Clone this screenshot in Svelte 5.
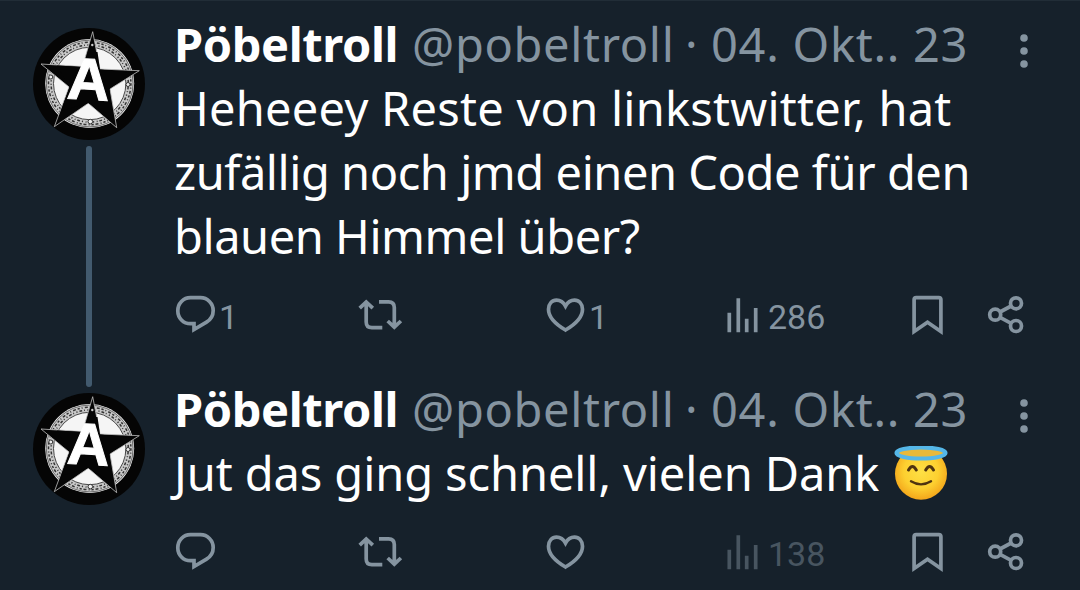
<script lang="ts">
	type Line = { text: string; fit: string };

	type Post = {
		id: number;
		lines: Line[];
		halo?: boolean;
		replies?: number;
		likes?: number;
		views: number;
		muted?: boolean;
	};

	const author = { name: 'Pöbeltroll', handle: '@pobeltroll', date: '04. Okt.. 23' };

	// fit picks the tracking used for that line
	const posts: Post[] = [
		{
			id: 1,
			lines: [
				{ text: 'Heheeey Reste von linkstwitter, hat', fit: 'loose' },
				{ text: 'zufällig noch jmd einen Code für den', fit: 'tight' },
				{ text: 'blauen Himmel über?', fit: 'tight' }
			],
			replies: 1,
			likes: 1,
			views: 286
		},
		{
			id: 2,
			lines: [{ text: 'Jut das ging schnell, vielen Dank', fit: 'snug' }],
			halo: true,
			views: 138,
			muted: true
		}
	];
</script>

{#snippet avatar()}
	<svg class="avatar" viewBox="0 0 112 112" role="img" aria-label={author.name}>
		<circle cx="56" cy="56" r="56" fill="#050505" />
		<circle cx="56.7" cy="55.5" r="44.5" fill="#f5f5f5" />
		<!-- lettering band -->
		<circle cx="56.7" cy="55.5" r="40.2" fill="none" stroke="#c8c8c8" stroke-width="7.6" />
		<g fill="none" stroke="#333">
			<circle cx="56.7" cy="55.5" r="43.4" stroke-width="0.6" />
			<circle cx="56.7" cy="55.5" r="36.2" stroke-width="0.9" />
			<circle cx="56.7" cy="55.5" r="41.2" stroke-width="1.5" stroke-dasharray="2.3 1.9 1 2.2 3 1.7" />
			<circle cx="56.7" cy="55.5" r="38.6" stroke-width="1.5" stroke-dasharray="1.2 2 2.8 1.8 .9 2.5" />
		</g>
		<g fill="#eee" stroke="#333" stroke-width="1">
			<circle cx="57.3" cy="93.6" r="2.3" />
			<circle cx="17.8" cy="49" r="2" />
			<circle cx="95" cy="56.5" r="2" />
		</g>
		<path
			d="M59.7 3.7 67 41 106.3 42.7 77 61 83.7 99.7 55.3 75.3 21.3 98.7 36 59 8 36 49.5 38.5Z"
			fill="#050505"
			stroke="#c0c0c0"
			stroke-width=".8"
		/>
		<path
			d="M55.5 24 50 38.9 24 37.5 36.5 59 28 83 55.3 75 77.5 88 76.5 61 94 44.500 67 41.500 64.500 24Z"
			fill="#050505"
		/>
		<circle cx="59.3" cy="17" r="1.2" fill="#ccc" />
		<text class="initial" x="55.3" y="71.8" text-anchor="middle" transform="rotate(3 56 56)">A</text>
	</svg>
{/snippet}

<main>
	{#each posts as post, i (post.id)}
		<article class="post">
			<div class="rail">
				{@render avatar()}
				{#if i < posts.length - 1}
					<div class="thread"></div>
				{/if}
			</div>

			<div class="content">
				<header>
					<span class="name">{author.name}</span>
					<span class="handle">{author.handle}</span>
					<span class="sep">·</span>
					<span class="date">{author.date}</span>
					<svg class="more" width="10" height="36" viewBox="0 0 10 36">
						<circle cx="5" cy="5" r="3.8" />
						<circle cx="5" cy="18" r="3.8" />
						<circle cx="5" cy="31" r="3.8" />
					</svg>
				</header>

				<div class="body">
					{#each post.lines as line}
						<p>
							<span class={line.fit}>{line.text}</span>
							{#if post.halo}
								<svg class="emoji" width="54" height="54" viewBox="0 0 54 54" role="img" aria-label="😇">
									<defs>
										<radialGradient id="face" cx=".5" cy=".45" r=".55">
											<stop offset="0" stop-color="#fee045" />
											<stop offset=".6" stop-color="#fdd030" />
											<stop offset="1" stop-color="#f3a61b" />
										</radialGradient>
									</defs>
									<circle cx="27" cy="27.7" r="26" fill="url(#face)" />
									<ellipse cx="27" cy="7" rx="24.6" ry="5.6" fill="#e8b93a" stroke="#55b7e8" stroke-width="4" />
									<g fill="none" stroke="#4f3410" stroke-linecap="round">
										<path d="M14.5 24q3.9-7 7.8 0M31.7 24q3.9-7 7.8 0" stroke-width="3" />
										<path d="M17 35.3q10 6.2 20 0" stroke-width="2.4" />
									</g>
								</svg>
							{/if}
						</p>
					{/each}
				</div>

				<footer>
					<div class="action">
						<svg width="42" height="42" viewBox="0 0 42 42">
							<path
								d="M15.5 2.7h10c7 0 12.7 5.8 12.7 12.9 0 4.9-2.6 9.2-6.7 11.6L19 34.5v-5.8h-3.5C8.3 28.7 2.8 23 2.8 15.7S8.3 2.7 15.5 2.7Z"
							/>
						</svg>
						{#if post.replies}<span class="count">{post.replies}</span>{/if}
					</div>
					<div class="action">
						<svg width="48" height="42" viewBox="0 0 48 42">
							<path d="M2.7 13.2 9.2 7l6.6 6.2M9.2 7v20q0 5.7 5.7 5.7h10.4M22 6.8h9.6q5.7 0 5.7 5.7v19.7M30.7 26l6.6 6.2 6.6-6.2" />
						</svg>
					</div>
					<div class="action">
						<svg width="42" height="42" viewBox="0 0 42 42">
							<path
								d="M20.5 35C12 30 3.5 22.5 3.5 14.2 3.5 8.8 7 5.1 11.5 5.1c4 0 7 2.2 9 6 2-3.8 5-6 9-6 4.5 0 8 3.7 8 9.1 0 8.3-8.5 15.8-17 20.8Z"
							/>
						</svg>
						{#if post.likes}<span class="count">{post.likes}</span>{/if}
					</div>
					<div class="action views" class:muted={post.muted}>
						<svg width="36" height="42" viewBox="0 0 36 42">
							<path d="M4.3 37.3V17.7M13.3 37.3V3.3M21.7 37.3V23.7M30.7 37.3V13" />
						</svg>
						<span class="count">{post.views}</span>
					</div>
					<div class="action">
						<svg width="36" height="42" viewBox="0 0 36 42">
							<path d="M4.1 36.5V4.7q0-2.1 2.1-2.1h22.6q2.1 0 2.1 2.1v31.800l-13.400-9.300Z" />
						</svg>
					</div>
					<div class="action">
						<svg width="38" height="42" viewBox="0 0 38 42">
							<circle cx="8.2" cy="19.7" r="5.5" />
							<circle cx="29" cy="8.3" r="5.5" />
							<circle cx="29" cy="31" r="5.5" />
							<path d="m13 17 11.2-6M13 22.3l11.2 6" />
						</svg>
					</div>
				</footer>
			</div>
		</article>
	{/each}
</main>

<style>
	:global(body) {
		margin: 0;
		background: #16212b;
	}

	main {
		box-sizing: border-box;
		width: 1080px;
		height: 590px;
		overflow: hidden;
		background: #16212b;
		box-shadow: inset 0 1px #212d37;
		color: #fff;
		font-family: 'Noto Sans', sans-serif;
	}

	.post {
		display: flex;
		box-sizing: border-box;
		height: 365px;
		padding: 12px 51px 0 33px;
	}

	.rail {
		display: flex;
		flex: none;
		flex-direction: column;
		align-items: center;
		width: 112px;
		padding-top: 16px;
		margin-right: 29px;
	}

	.avatar {
		display: block;
		flex: none;
		width: 112px;
		height: 112px;
	}

	.initial {
		font: bold 59px 'Liberation Sans', sans-serif;
		fill: #fff;
		stroke: #fff;
		stroke-width: 1;
	}

	.thread {
		flex: none;
		width: 6px;
		height: 241px;
		margin-top: 6px;
		border-radius: 3px;
		background: #425a6e;
	}

	.content {
		flex: 1;
		min-width: 0;
	}

	header {
		display: grid;
		grid-template-columns: 238px 273px 26px 1fr 10px;
		height: 64px;
		font-size: 47px;
		line-height: 64px;
		white-space: nowrap;
		color: #8594a0;
	}

	.name {
		font-weight: 700;
		letter-spacing: -0.4px;
		color: #fff;
	}

	.handle {
		letter-spacing: 0.65px;
	}

	.date {
		letter-spacing: 0.72px;
	}

	.more {
		margin-top: 21px;
		overflow: visible;
		fill: #8594a0;
	}

	.body {
		font-size: 47px;
		line-height: 64px;
		white-space: nowrap;
	}

	p {
		display: flex;
		height: 64px;
		margin: 0;
	}

	.loose {
		letter-spacing: 0.24px;
	}

	.tight {
		letter-spacing: -0.45px;
	}

	.snug {
		letter-spacing: -0.09px;
	}

	.emoji {
		margin: 5px 0 0 15px;
	}

	footer {
		display: grid;
		grid-template-columns: 182px 188px 180px 185px 77px auto;
		margin: 27px 0 0 1px;
		color: #8594a0;
	}

	.action {
		display: flex;
		height: 42px;
	}

	.action svg {
		flex: none;
		fill: none;
		stroke: currentColor;
		stroke-width: 3.7;
	}

	.count {
		margin-left: 2px;
		font: 34px/44px Roboto, sans-serif;
	}

	.views .count {
		margin-left: 7px;
	}

	.muted {
		color: #485560;
	}
</style>
